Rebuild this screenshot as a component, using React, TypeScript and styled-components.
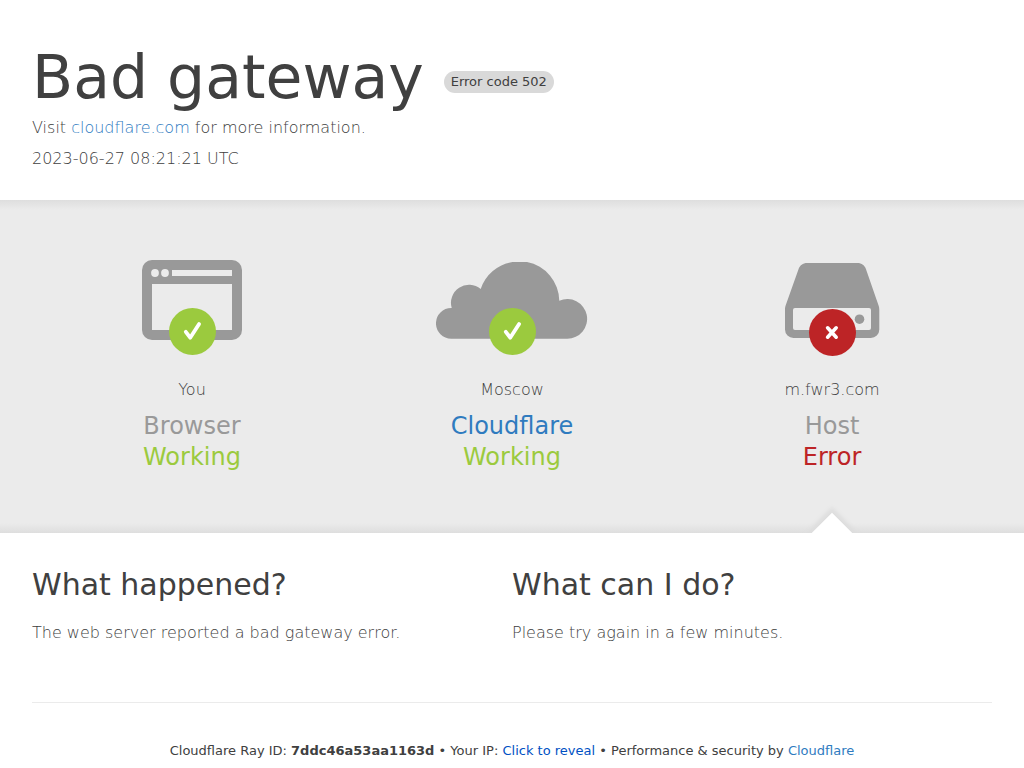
import React from "react";
import styled, { createGlobalStyle } from "styled-components";

const GlobalStyle = createGlobalStyle`
  *, *::before, *::after { box-sizing: border-box; }
  body {
    margin: 0;
    background: #fff;
    color: #404040;
    font-family: "DejaVu Sans", Verdana, sans-serif;
    font-size: 16px;
    font-weight: 300;
    line-height: 24px;
  }
  h1, h2, h3, p { margin: 0; }
`;

const Header = styled.header`
  padding: 40px 32px 29px;
`;

const TitleRow = styled.div`
  display: flex;
  flex-wrap: wrap;
  align-items: center;
  column-gap: 20px;
`;

const Title = styled.h1`
  font-size: 60px;
  font-weight: 400;
  line-height: 75px;
`;

const CodePill = styled.span`
  margin-top: 9px;
  padding: 2px 7px;
  border-radius: 11px;
  background: #d9d9d9;
  font-size: 13px;
  font-weight: 400;
  line-height: 18px;
`;

const HeaderLines = styled.div`
  display: grid;
  gap: 7px;
  margin-top: 1px;
`;

const Link = styled.a`
  color: #2f7bbf;
  text-decoration: none;
`;

const StatusBand = styled.section`
  overflow: hidden;
  padding: 0 32px;
  background: linear-gradient(180deg, #dedede, #ebebeb 3%, #ebebeb 97%, #dedede);
`;

const StatusGrid = styled.div`
  display: grid;
  grid-template-columns: repeat(3, 1fr);
`;

const StatusCard = styled.div<{ $source?: boolean }>`
  position: relative;
  display: flex;
  flex-direction: column;
  align-items: center;
  padding: 60px 0;
  text-align: center;

  &::after {
    content: "";
    display: ${(p) => (p.$source ? "block" : "none")};
    position: absolute;
    bottom: -28px;
    left: 50%;
    width: 40px;
    height: 40px;
    margin-left: -20px;
    background: #fff;
    box-shadow: 0 0 4px 4px #dedede;
    transform: rotate(45deg);
  }
`;

const StatusIcon = styled.svg`
  display: block;
  width: 152px;
  height: 96px;
`;

const Place = styled.span`
  margin: 22px 0 9px;
`;

const Kind = styled.h3<{ $color: string }>`
  color: ${(p) => p.$color};
  font-size: 24px;
  font-weight: 400;
  line-height: 31px;
`;

const State = styled(Kind).attrs({ as: "span" })``;

const Details = styled.section`
  display: grid;
  grid-template-columns: 1fr 1fr;
  padding: 32px 32px 57px;
`;

const DetailTitle = styled.h2`
  margin-bottom: 17px;
  font-size: 30px;
  font-weight: 400;
  line-height: 39px;
`;

const Footer = styled.footer`
  margin: 0 32px;
  padding: 38px 0 6px;
  border-top: 1px solid #ebebeb;
  font-size: 13px;
  font-weight: 400;
  line-height: 20px;
  text-align: center;
`;

const RevealButton = styled.button`
  padding: 0;
  border: 0;
  background: none;
  color: #0051c3;
  font: inherit;
  cursor: pointer;
`;

function Tick() {
  return (
    <>
      <circle cx="76.5" cy="71.5" r="23.5" fill="#9bca3e" />
      <path d="M69.8 71.8l4.400 5.900 8.900-13.700" fill="none" stroke="#fff" strokeWidth="3.8" strokeLinecap="round" strokeLinejoin="round" />
    </>
  );
}

function Cross() {
  return (
    <>
      <circle cx="76.5" cy="72.5" r="23.5" fill="#bd2426" />
      <path d="M71.6 67.8l8.600 9.400M80.200 67.8l-8.600 9.400" fill="none" stroke="#fff" strokeWidth="3.6" strokeLinecap="round" />
    </>
  );
}

function BrowserIcon() {
  return (
    <StatusIcon viewBox="0 0 152 96" aria-hidden="true">
      <rect x="26" y="0" width="100" height="80" rx="10" fill="#999" />
      <rect x="36" y="24" width="80" height="46" fill="#ebebeb" />
      <rect x="56" y="10" width="60" height="6" fill="#ebebeb" />
      <circle cx="39" cy="13" r="3.9" fill="#ebebeb" />
      <circle cx="49" cy="13" r="3.9" fill="#ebebeb" />
      <Tick />
    </StatusIcon>
  );
}

function CloudIcon() {
  return (
    <StatusIcon viewBox="0 0 152 96" aria-hidden="true">
      <path
        fill="#999"
        d="M15.3 78.7A15.35 15.35 0 0 1 15.3 48H15.7A18.1 18.1 0 0 1 44.7 29A40 40 0 0 1 76.5 2H91A40 40 0 0 1 123.3 40.8A19.8 19.8 0 1 1 131.2 78.7Z"
      />
      <Tick />
    </StatusIcon>
  );
}

function HostIcon() {
  return (
    <StatusIcon viewBox="0 0 152 96" aria-hidden="true">
      <path
        fill="#999"
        d="M51 3H101.5C105.6 3 108.8 5.4 110 9.2L122.4 45C123 46.6 123.3 48 123.3 50V69.5A8.5 8.5 0 0 1 114.8 78H37.5A8.5 8.5 0 0 1 29 69.5V50C29 48 29.2 46.6 29.8 45L42.5 9.2C43.8 5.4 46.9 3 51 3Z"
      />
      <rect x="37" y="48" width="78" height="22" rx="2" fill="#ebebeb" />
      <circle cx="103.5" cy="59.2" r="4.8" fill="#999" />
      <Cross />
    </StatusIcon>
  );
}

export default function App() {
  return (
    <>
      <GlobalStyle />
      <Header>
        <TitleRow>
          <Title>Bad gateway</Title>
          <CodePill>Error code 502</CodePill>
        </TitleRow>
        <HeaderLines>
          <p>
            Visit <Link href="https://www.cloudflare.com/">cloudflare.com</Link> for more information.
          </p>
          <p>2023-06-27 08:21:21 UTC</p>
        </HeaderLines>
      </Header>

      <main>
        <StatusBand>
          <StatusGrid>
            <StatusCard>
              <BrowserIcon />
              <Place>You</Place>
              <Kind $color="#999">Browser</Kind>
              <State $color="#9bca3e">Working</State>
            </StatusCard>
            <StatusCard>
              <CloudIcon />
              <Place>Moscow</Place>
              <Kind $color="#2f7bbf">
                <Link href="https://www.cloudflare.com/">Cloudflare</Link>
              </Kind>
              <State $color="#9bca3e">Working</State>
            </StatusCard>
            <StatusCard $source>
              <HostIcon />
              <Place>m.fwr3.com</Place>
              <Kind $color="#999">Host</Kind>
              <State $color="#bd2426">Error</State>
            </StatusCard>
          </StatusGrid>
        </StatusBand>

        <Details>
          <div>
            <DetailTitle>What happened?</DetailTitle>
            <p>The web server reported a bad gateway error.</p>
          </div>
          <div>
            <DetailTitle>What can I do?</DetailTitle>
            <p>Please try again in a few minutes.</p>
          </div>
        </Details>
      </main>

      <Footer>
        Cloudflare Ray ID: <strong>7ddc46a53aa1163d</strong> • Your IP:{" "}
        <RevealButton type="button">Click to reveal</RevealButton> • Performance &amp; security by{" "}
        <Link href="https://www.cloudflare.com/">Cloudflare</Link>
      </Footer>
    </>
  );
}
